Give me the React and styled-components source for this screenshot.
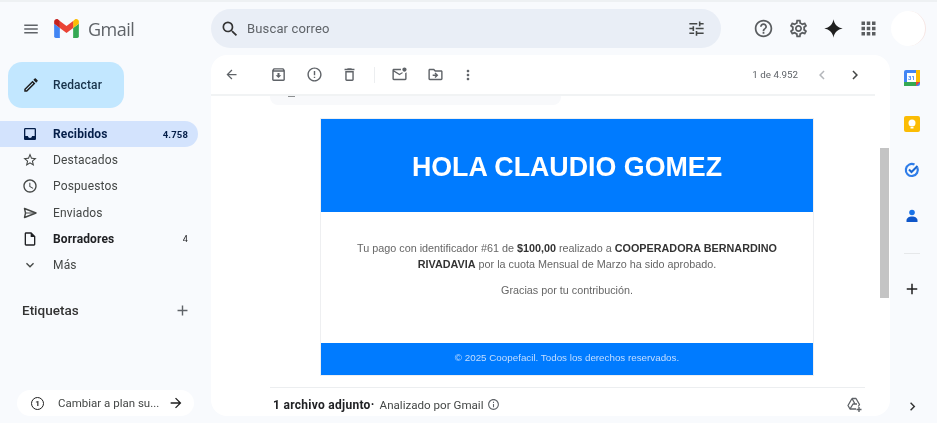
import React from 'react';
import styled, { createGlobalStyle } from 'styled-components';
import {
  MdMenu, MdSearch, MdTune, MdHelpOutline, MdOutlineSettings, MdApps, MdArrowBack, MdOutlineArchive,
  MdErrorOutline, MdOutlineDelete, MdOutlineMarkEmailUnread, MdOutlineDriveFileMove, MdMoreVert,
  MdChevronLeft, MdChevronRight, MdInbox, MdStarBorder, MdAccessTime,
  MdOutlineInsertDriveFile, MdExpandMore, MdAdd, MdArrowForward, MdInfoOutline,
  MdOutlineEdit
} from 'react-icons/md';

const Global = createGlobalStyle`
  html, body { margin: 0; padding: 0; background: #f8fafd; overflow: hidden; }
  * { box-sizing: border-box; }
`;

const Page = styled.div`
  width: 937px; height: 423px; display: flex; flex-direction: column; overflow: hidden;
  background: #f8fafd; border-top: 2px solid #eef1f3; font-family: Roboto, "Liberation Sans", sans-serif;
  color: #444746; filter: blur(0.45px);
`;
const Header = styled.header`
  height: 53px; flex: none; display: flex; align-items: center;
`;
const Brand = styled.div`
  width: 211px; flex: none; display: flex; align-items: center; padding-left: 22px; color: #5f6368;
`;
const GmailWord = styled.span`
  font-size: 18px; margin-left: 9px; color: #5f6368; font-family: "Open Sans", sans-serif; letter-spacing: -0.5px;
`;
const LogoWrap = styled.div`margin-left: 14px; display: flex;`;
const SearchBar = styled.div`
  width: 510px; height: 39px; border-radius: 20px; background: #e9eef6; display: flex; align-items: center;
  padding: 0 15px 0 9px; gap: 7px; flex: none; font-size: 13px; color: #5f6368;
`;
const SearchText = styled.span`flex: 1; letter-spacing: 0.15px;`;
const HeaderIcons = styled.div`
  display: flex; align-items: center; margin-left: 32px; gap: 14px; color: #5a5d60;
`;
const Avatar = styled.div`
  width: 35px; height: 35px; border-radius: 50%; background: #fff; margin-left: 12px; flex: none;
  border-right: 1px solid #f6e6e4;
`;
const Body = styled.div`flex: 1; display: flex; min-height: 0;`;
const Sidebar = styled.aside`
  width: 211px; flex: none; display: flex; flex-direction: column; padding: 7px 0 7px;
`;
const Compose = styled.div`
  width: 116px; height: 46px; margin-left: 8px; border-radius: 14px; background: #c2e7ff; color: #17324a;
  display: flex; align-items: center; padding-left: 14px; gap: 13px; font-size: 12px; font-weight: 500; letter-spacing: .1px;
`;
const Nav = styled.nav`margin-top: 13px; display: flex; flex-direction: column;`;
const NavItem = styled.div`
  width: 198px; height: 26.2px; display: flex; align-items: center; padding: 0 10px 0 22px; gap: 15px;
  border-radius: 0 13px 13px 0; font-size: 12px; letter-spacing: 0.15px;
  background: ${p => (p.$active ? '#d3e3fd' : 'transparent')};
  color: ${p => (p.$active ? '#041e49' : p.$bold ? '#202124' : '#444746')};
  font-weight: ${p => (p.$bold ? 700 : 400)};
`;
const NavLabel = styled.span`flex: 1;`;
const Count = styled.span`
  font-size: ${p => (p.$small ? '9px' : '9.5px')}; font-weight: ${p => (p.$small ? 400 : 700)};
`;
const LabelsHead = styled.div`
  display: flex; align-items: center; justify-content: space-between; width: 198px; margin-top: 20px;
  padding: 0 7px 0 22px; font-size: 13.5px; font-weight: 500; color: #333; height: 24px;
`;
const Upgrade = styled.div`
  margin: auto 0 0 17px; width: 177px; height: 26px; background: #fff; border-radius: 13px; display: flex;
  align-items: center; padding: 0 10px 0 14px; font-size: 11.5px; color: #444746; gap: 8px;
`;
const UpgradeNum = styled.span`
  width: 13px; height: 13px; border: 1.5px solid #1f1f1f; border-radius: 50%; font-size: 8px; font-weight: 700;
  color: #1f1f1f; display: flex; align-items: center; justify-content: center; flex: none; margin-right: 6px;
`;
const UpgradeText = styled.span`flex: 1; white-space: nowrap;`;
const Main = styled.main`
  width: 679px; flex: none; margin-bottom: 7px; background: #fff; border-radius: 16px; display: flex;
  flex-direction: column; overflow: hidden;
`;
const Toolbar = styled.div`
  height: 41px; flex: none; display: flex; align-items: center; padding: 0 11px 0 13px; margin-right: 15px;
  border-bottom: 2px solid #f1f3f4; color: #5f6368;
`;
const ToolGroup = styled.div`display: flex; align-items: center; gap: ${p => p.$gap || 18.5}px; margin-left: ${p => p.$ml || 0}px;`;
const Divider = styled.div`width: 1px; height: 16px; background: #eceef0; margin-left: 16px;`;
const Pager = styled.div`margin-left: auto; display: flex; align-items: center; font-size: 9.8px; color: #5f6368;`;
const PagerBtn = styled.span`
  display: flex; margin-left: ${p => p.$ml}px; color: ${p => (p.$off ? '#b4b7bb' : '#444746')};
`;
const Content = styled.div`flex: 1; display: flex; min-height: 0;`;
const Scroll = styled.div`flex: 1; display: flex; flex-direction: column; min-width: 0;`;
const Strip = styled.div`
  width: 291px; height: 9px; margin-left: 59px; background: #f8f9fb; border-radius: 0 0 8px 8px; flex: none; position: relative;
`;
const StripDash = styled.span`
  position: absolute; left: 18px; top: 0; width: 7px; height: 1px; background: #8d9092;
`;
const Card = styled.div`
  width: 494px; height: 258px; margin: 13px 0 0 109px; background: #fff; border: 1px solid #eeeff1; flex: none;
  display: flex; flex-direction: column;
`;
const Hero = styled.div`
  height: 93px; background: #007bff; color: #fff; display: flex; align-items: center; justify-content: center;
  padding-top: 3px; font-family: "Liberation Sans", Arial, sans-serif; font-weight: 700; font-size: 26.8px; flex: none;
`;
const Message = styled.div`
  flex: 1; padding: 28px 30px 0; text-align: center; font-family: "Liberation Sans", Arial, sans-serif;
  font-size: 10.8px; line-height: 16px; color: #666;
`;
const Para = styled.p`margin: 0 0 10px;`;
const Strong = styled.b`color: #333;`;
const CardFoot = styled.div`
  height: 32px; flex: none; background: #007bff; color: #c4deff; display: flex; align-items: center; justify-content: center;
  padding-bottom: 3px; font-family: "Liberation Sans", Arial, sans-serif; font-size: 9.8px;
`;
const Attach = styled.div`
  margin: 11px 0 0 59px; width: 595px; border-top: 1px solid #eceef0; flex: 1; display: flex; align-items: center;
  padding: 5px 2px 0 3px; font-size: 11.6px; color: #444746;
`;
const AttachB = styled.b`color: #202124; font-weight: 700; margin-right: 5px; font-size: 12px; letter-spacing: .28px;`;
const AttachIcon = styled.span`display: flex; margin-left: 3px; color: #5f6368;`;
const AttachEnd = styled.span`display: flex; margin-left: auto; color: #5f6368;`;
const Track = styled.div`width: 15px; flex: none; display: flex; padding: 0 1px 0 5px;`;
const Thumb = styled.div`width: 9px; height: 150px; margin-top: 52px; background: #c4c4c4;`;
const Rail = styled.aside`
  flex: 1; display: flex; flex-direction: column; align-items: center; padding: 13px 3px 8px 0;
`;
const RailItem = styled.div`height: 20px; margin-bottom: ${p => p.$mb ?? 26}px; display: flex; align-items: center; justify-content: center; color: #1f1f1f;`;
const RailDivider = styled.div`width: 16px; height: 1px; background: #e6e8ea; margin: 1px 0 25px;`;
const RailEnd = styled.div`margin-top: auto; display: flex; color: #333;`;

const GmailLogo = () => (
  <svg width="25" height="19" viewBox="0 0 52 40">
    <path fill="#4285f4" d="M3.5 40h8.5V19L0 10v26.5A3.5 3.5 0 0 0 3.5 40z" />
    <path fill="#34a853" d="M40 40h8.5a3.5 3.5 0 0 0 3.5-3.5V10L40 19z" />
    <path fill="#fbbc04" d="M40 4v15l12-9V5.5c0-4.5-5-7-8.5-4.5z" />
    <path fill="#ea4335" d="M12 19V4l14 10.5L40 4v15L26 29.5z" />
    <path fill="#c5221f" d="M0 5.5V10l12 9V4L8.5 1C5 -1.5 0 1 0 5.5z" />
  </svg>
);
const Spark = () => (
  <svg width="21" height="21" viewBox="0 0 24 24"><path fill="#1f1f1f" d="M12 1.5c.9 5.8 4.7 9.6 10.5 10.5-5.8.9-9.6 4.7-10.5 10.5C11.1 16.7 7.3 12.9 1.5 12 7.3 11.1 11.1 7.3 12 1.5z" /></svg>
);
const SendOutline = () => (
  <svg width="16" height="16" viewBox="0 0 16 16" fill="none" stroke="currentColor" strokeWidth="1.4" strokeLinejoin="round">
    <path d="M2.5 3.5L14 8 2.5 12.5l1-4.5z" />
    <path d="M3.5 8H14" strokeWidth="1" />
  </svg>
);
const DriveAdd = () => (
  <svg width="17" height="17" viewBox="0 0 17 17" fill="none" stroke="currentColor" strokeWidth="1.3" strokeLinejoin="round">
    <path d="M6 2.5h4l3.5 6-1.2 2M6 2.5L2 9.5l2 3.5h6" />
    <path d="M6 2.500L9 8M4 13l3-5h4" />
    <path d="M13 11v5M10.5 13.5h5" strokeWidth="1.4" />
  </svg>
);
const Calendar = () => (
  <svg width="16" height="16" viewBox="0 0 16 16">
    <rect x="0" y="0" width="16" height="16" rx="2" fill="#4285f4" />
    <rect x="12" y="0" width="4" height="12" fill="#fbbc04" />
    <rect x="0" y="12" width="12" height="4" fill="#34a853" />
    <path d="M12 12h4l-4 4z" fill="#ea4335" />
    <rect x="3" y="3" width="9" height="9" fill="#fff" />
    <text x="7.5" y="10" fontSize="6" fontWeight="700" textAnchor="middle" fill="#4285f4" fontFamily="Roboto">31</text>
  </svg>
);
const Keep = () => (
  <svg width="16" height="16" viewBox="0 0 16 16">
    <rect width="16" height="16" rx="2" fill="#fbbc04" />
    <circle cx="8" cy="7" r="3.5" fill="#fff" />
    <rect x="6.5" y="11" width="3" height="1.5" fill="#fff" />
  </svg>
);
const Tasks = () => (
  <svg width="16" height="16" viewBox="0 0 16 16" fill="none">
    <path d="M13.3 5.5A6 6 0 1 1 10.5 2.6" stroke="#2f7de9" strokeWidth="2.2" />
    <path d="M5 7.5l2.5 2.5 6-6" stroke="#1967d2" strokeWidth="2" />
  </svg>
);
const Contacts = () => (
  <svg width="16" height="16" viewBox="0 0 16 16">
    <circle cx="8" cy="4.5" r="2.8" fill="#1a73e8" />
    <path d="M2.500 14v-1.500C2.500 10 5 8.500 8 8.500s5.500 1.500 5.500 4V14z" fill="#0f56c9" />
  </svg>
);

const nav = [
  { Icon: MdStarBorder, label: 'Destacados' },
  { Icon: MdAccessTime, label: 'Pospuestos' },
  { Icon: SendOutline, label: 'Enviados' },
  { Icon: MdOutlineInsertDriveFile, label: 'Borradores', bold: true, count: '4' },
  { Icon: MdExpandMore, label: 'Más' },
];

export default function App() {
  return (
    <Page>
      <Global />
      <Header>
        <Brand>
          <MdMenu size={18} />
          <LogoWrap><GmailLogo /></LogoWrap>
          <GmailWord>Gmail</GmailWord>
        </Brand>
        <SearchBar>
          <MdSearch size={20} color="#333" />
          <SearchText>Buscar correo</SearchText>
          <MdTune size={19} color="#444746" />
        </SearchBar>
        <HeaderIcons>
          <MdHelpOutline size={21} />
          <MdOutlineSettings size={21} />
          <Spark />
          <MdApps size={21} />
        </HeaderIcons>
        <Avatar />
      </Header>
      <Body>
        <Sidebar>
          <Compose><MdOutlineEdit size={18} color="#1f1f1f" />Redactar</Compose>
          <Nav>
            <NavItem $active $bold>
              <MdInbox size={16} />
              <NavLabel>Recibidos</NavLabel>
              <Count>4.758</Count>
            </NavItem>
            {nav.map(({ Icon, label, bold, count }) => (
              <NavItem key={label} $bold={bold}>
                <Icon size={16} />
                <NavLabel>{label}</NavLabel>
                {count && <Count $small>{count}</Count>}
              </NavItem>
            ))}
          </Nav>
          <LabelsHead>Etiquetas<MdAdd size={17} color="#5f6368" /></LabelsHead>
          <Upgrade>
            <UpgradeNum>1</UpgradeNum>
            <UpgradeText>Cambiar a plan su...</UpgradeText>
            <MdArrowForward size={16} color="#1f1f1f" />
          </Upgrade>
        </Sidebar>
        <Main>
          <Toolbar>
            <MdArrowBack size={15} />
            <ToolGroup $ml={31}>
              <MdOutlineArchive size={17} />
              <MdErrorOutline size={17} />
              <MdOutlineDelete size={17} />
            </ToolGroup>
            <Divider />
            <ToolGroup $ml={16}>
              <MdOutlineMarkEmailUnread size={17} />
              <MdOutlineDriveFileMove size={17} />
            </ToolGroup>
            <ToolGroup $ml={16}><MdMoreVert size={16} /></ToolGroup>
            <Pager>
              1 de 4.952
              <PagerBtn $ml={15} $off><MdChevronLeft size={18} /></PagerBtn>
              <PagerBtn $ml={15}><MdChevronRight size={18} /></PagerBtn>
            </Pager>
          </Toolbar>
          <Content>
            <Scroll>
              <Strip><StripDash /></Strip>
              <Card>
                <Hero>HOLA CLAUDIO GOMEZ</Hero>
                <Message>
                  <Para>
                    Tu pago con identificador #61 de <Strong>$100,00</Strong> realizado a <Strong>COOPERADORA BERNARDINO RIVADAVIA</Strong> por la cuota Mensual de Marzo ha sido aprobado.
                  </Para>
                  <Para>Gracias por tu contribución.</Para>
                </Message>
                <CardFoot>© 2025 Coopefacil. Todos los derechos reservados.</CardFoot>
              </Card>
              <Attach>
                <AttachB>1 archivo adjunto·</AttachB>
                Analizado por Gmail
                <AttachIcon><MdInfoOutline size={13} /></AttachIcon>
                <AttachEnd><DriveAdd /></AttachEnd>
              </Attach>
            </Scroll>
            <Track><Thumb /></Track>
          </Content>
        </Main>
        <Rail>
          <RailItem><Calendar /></RailItem>
          <RailItem><Keep /></RailItem>
          <RailItem><Tasks /></RailItem>
          <RailItem><Contacts /></RailItem>
          <RailDivider />
          <RailItem><MdAdd size={18} /></RailItem>
          <RailEnd><MdChevronRight size={17} /></RailEnd>
        </Rail>
      </Body>
    </Page>
  );
}
